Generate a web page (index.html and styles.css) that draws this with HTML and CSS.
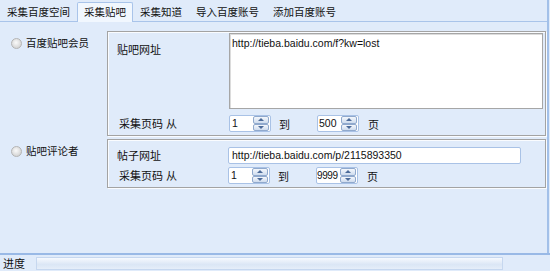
FILE: index.html
```html
<!DOCTYPE html>
<html lang="zh-CN">
<head>
<meta charset="utf-8">
<title>采集贴吧</title>
<link rel="stylesheet" href="styles.css">
</head>
<body>
<div class="app">
  <div class="main">
    <div class="tabs">
      <div class="tab">采集百度空间</div>
      <div class="tab active">采集贴吧</div>
      <div class="tab">采集知道</div>
      <div class="tab">导入百度账号</div>
      <div class="tab">添加百度账号</div>
    </div>
    <div class="page">
      <div class="row">
        <div class="side"><span class="radio"></span>百度贴吧会员</div>
        <div class="group g1">
          <div class="lbl l-url">贴吧网址</div>
          <div class="textarea">http://tieba.baidu.com/f?kw=lost</div>
          <div class="lbl l-page">采集页码 从</div>
          <div class="spins">
            <div class="spin"><span class="val">1</span><span class="btns"><span class="b up"></span><span class="b down"></span></span></div>
            <span class="to">到</span>
            <div class="spin s2"><span class="val">500</span><span class="btns"><span class="b up"></span><span class="b down"></span></span></div>
            <span class="pg">页</span>
          </div>
        </div>
      </div>
      <div class="row row2">
        <div class="side"><span class="radio"></span>贴吧评论者</div>
        <div class="group g2">
          <div class="lbl l-url2">帖子网址</div>
          <div class="input">http://tieba.baidu.com/p/2115893350</div>
          <div class="lbl l-page">采集页码 从</div>
          <div class="spins">
            <div class="spin"><span class="val">1</span><span class="btns"><span class="b up"></span><span class="b down"></span></span></div>
            <span class="to">到</span>
            <div class="spin s2"><span class="val v4">9999</span><span class="btns"><span class="b up"></span><span class="b down"></span></span></div>
            <span class="pg">页</span>
          </div>
        </div>
      </div>
    </div>
  </div>
  <div class="status">
    <span class="st-lbl">进度</span>
    <div class="progress"></div>
  </div>
</div>
</body>
</html>
```
FILE: styles.css
```css
html, body {
  margin: 0;
  padding: 0;
}
body {
  width: 550px;
  height: 271px;
  overflow: hidden;
  background: #e0ebfa;
  font-family: "Liberation Sans", "Noto Sans CJK SC", sans-serif;
  font-size: 11px;
  color: #111;
}
.app {
  width: 550px;
  height: 271px;
  display: flex;
  flex-direction: column;
}
.main {
  height: 253px;
  margin-right: 1px;
  border-right: 2px solid #a2c0e9;
  display: flex;
  flex-direction: column;
}
.tabs {
  height: 21px;
  border-bottom: 1px solid #a9c4ea;
  display: flex;
  align-items: flex-end;
  font-size: 10.5px;
}
.tab {
  height: 17px;
  line-height: 17px;
  padding: 0 7px;
  white-space: nowrap;
}
.tab.active {
  height: 19px;
  line-height: 19px;
  margin-bottom: -1px;
  padding: 0 6px;
  background: #f1f7fe;
  border: 1px solid #a9c4ea;
  border-bottom: none;
  border-radius: 2px 2px 0 0;
}
.page {
  flex: 1;
  padding-top: 9px;
}
.row {
  display: flex;
}
.row2 {
  margin-top: 3px;
}
.side {
  width: 107px;
  box-sizing: border-box;
  padding-left: 11px;
  margin-top: 5px;
  height: 14px;
  line-height: 14px;
  display: flex;
  align-items: center;
  align-self: flex-start;
  white-space: nowrap;
  font-size: 10.5px;
}
.radio {
  width: 9px;
  height: 9px;
  border-radius: 50%;
  border: 1px solid #b4b4b4;
  background: radial-gradient(circle at 45% 40%, #fafafa 0, #dedede 55%, #c9c9c9 100%);
  margin-right: 4px;
  flex: none;
}
.group {
  width: 439px;
  box-sizing: border-box;
  border: 1px solid #a3a3a3;
  box-shadow: inset 1px 1px 0 #fafcff, 1px 1px 0 #fafcff;
  display: grid;
  align-items: start;
}
.g1 {
  grid-template-columns: 121px 314px;
  padding: 1px 0 3px;
  row-gap: 6px;
}
.g2 {
  grid-template-columns: 120px 293px;
  padding: 7px 0 3px;
  row-gap: 3px;
}
.lbl {
  white-space: nowrap;
  line-height: 14px;
}
.l-url {
  padding: 10px 0 0 9px;
}
.l-url2 {
  padding: 2px 0 0 9px;
}
.l-page {
  padding: 2px 0 0 11px;
}
.textarea {
  height: 76px;
  box-sizing: border-box;
  background: #fff;
  border: 1px solid #a6a6a6;
  box-shadow: inset 1px 1px 0 #dcdcdc;
  padding: 3px 2px;
  font-size: 10.5px;
  line-height: 13px;
}
.input {
  height: 17px;
  box-sizing: border-box;
  background: #fff;
  border: 1px solid #a9c2e6;
  border-radius: 2px;
  padding: 0 3px;
  font-size: 10.5px;
  line-height: 15px;
}
.spins {
  display: flex;
  align-items: center;
  height: 17px;
}
.spin {
  width: 42px;
  height: 17px;
  box-sizing: border-box;
  border: 1px solid #a9c2e6;
  border-radius: 2px;
  background: #fff;
  display: flex;
  align-items: stretch;
}
.val {
  flex: 1;
  padding-left: 2px;
  font-size: 10.5px;
  line-height: 15px;
  white-space: nowrap;
}
.s2 .val {
  padding-left: 1px;
}
.v4 {
  padding-left: 0 !important;
  letter-spacing: -0.4px;
  font-size: 10px;
}
.btns {
  width: 16px;
  flex: none;
  display: flex;
  flex-direction: column;
  padding: 0 1px 0 0;
}
.b {
  flex: 1;
  box-sizing: border-box;
  border: 1px solid #90a9cd;
  border-radius: 2px;
  background: linear-gradient(#f4f7fc, #cfdcee);
  display: flex;
  align-items: center;
  justify-content: center;
}
.b::before {
  content: "";
  width: 0;
  height: 0;
  border-left: 3px solid transparent;
  border-right: 3px solid transparent;
}
.up::before {
  border-bottom: 3px solid #4c6b99;
}
.down::before {
  border-top: 3px solid #4c6b99;
}
.to {
  margin-left: 8px;
  width: 11px;
}
.s2 {
  margin-left: 27px;
}
.pg {
  margin-left: 9px;
}
.status {
  flex: 1;
  border-top: 2px solid #99b9e6;
  display: flex;
  align-items: center;
}
.st-lbl {
  width: 36px;
  box-sizing: border-box;
  padding-left: 3px;
  white-space: nowrap;
}
.progress {
  width: 467px;
  height: 13px;
  box-sizing: border-box;
  border: 1px solid #c6d7ef;
  background: linear-gradient(#f6f9fe, #dbe6f5 60%, #e6eef9);
}
```
